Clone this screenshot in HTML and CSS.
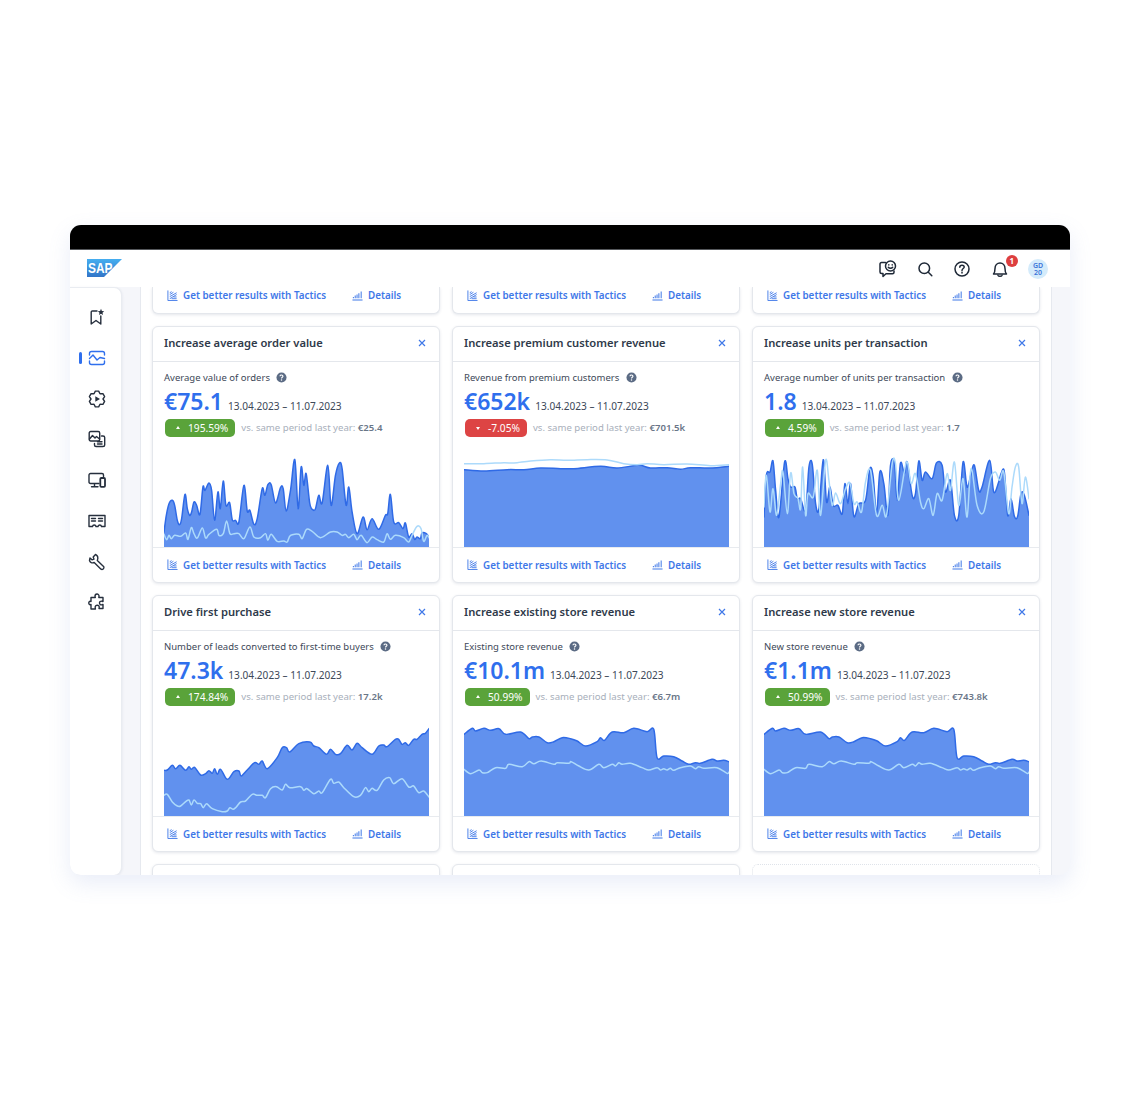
FILE: index.html
```html
<!DOCTYPE html>
<html lang="en">
<head>
<meta charset="utf-8">
<title>Tactics</title>
<link rel="stylesheet" href="styles.css">
</head>
<body>
<svg class="defs" width="0" height="0" aria-hidden="true">
  <symbol id="i-tactics" viewBox="0 0 12 12"><path d="M1 .5V11.5H11.5M3 9.5 10.5 5M3 7.2 10.5 3M3 5 7 2.5M3 3 5 1.8M5 9.5H10.5M7 7.6H10.5" fill="none" stroke="currentColor" stroke-width="1"/></symbol>
  <symbol id="i-bars" viewBox="0 0 12 12"><path d="M.5 11H11.5M1.5 9V7.5M3.5 9V6M5.5 9V5M7.5 9V3.5M10 9V1.5" fill="none" stroke="currentColor" stroke-width="1.1"/></symbol>
  <symbol id="i-help" viewBox="0 0 12 12"><circle cx="6" cy="6" r="5.5" fill="#5b6b84"/><path d="M4.4 4.7C4.4 3.7 5.1 3.2 6 3.2S7.6 3.8 7.6 4.6C7.6 5.7 6 5.7 6 7" fill="none" stroke="#fff" stroke-width="1.2"/><circle cx="6" cy="8.8" r=".8" fill="#fff"/></symbol>
  <symbol id="i-close" viewBox="0 0 8 8"><path d="M1 1 7 7M7 1 1 7" fill="none" stroke="currentColor" stroke-width="1.2"/></symbol>
</svg>
<div class="window">
  <div class="topbar"></div>
  <header class="header">
    <svg class="logo" viewBox="0 0 35 18" width="35" height="18">
      <defs><linearGradient id="sap" x1="0" y1="0" x2="0" y2="1"><stop offset="0" stop-color="#45aef0"/><stop offset="1" stop-color="#3275c8"/></linearGradient></defs>
      <polygon points="0,0 35,0 17,18 0,18" fill="url(#sap)"/>
      <text x="1" y="14" class="logo-text" textLength="24.5" lengthAdjust="spacingAndGlyphs">SAP</text>
    </svg>
    <div class="tools">
      <svg class="tool" viewBox="0 0 18 18"><path d="M6.5 2.5H2.5C1.6 2.5 1 3.1 1 4V12C1 12.9 1.6 13.5 2.5 13.5H4V16.5L7 13.8H13.5C14.4 13.8 15 13.2 15 12.3V11"/><circle cx="11.5" cy="6" r="5"/><path d="M9.3 7.3C10.3 8.5 12.7 8.5 13.7 7.3M9.8 4.7V5M13.2 4.7V5"/></svg>
      <svg class="tool" viewBox="0 0 18 18"><circle cx="8.3" cy="8.3" r="5.3"/><path d="M12.3 12.3 15.8 15.8"/></svg>
      <svg class="tool" viewBox="0 0 18 18"><circle cx="9" cy="9" r="7"/><path d="M6.8 7.2C6.8 5.9 7.8 5.2 9 5.2S11.2 6 11.2 7C11.2 8.5 9 8.5 9 10.4M9 12.2V13"/></svg>
      <div class="bell">
        <svg class="tool" viewBox="0 0 18 18"><path d="M2.5 14H15.5C14.2 12.6 14 11.5 14 8.5 14 5.3 11.8 3 9 3S4 5.3 4 8.5C4 11.5 3.8 12.6 2.5 14ZM7 15.5C7.5 16.5 10.5 16.5 11 15.5"/></svg>
        <span class="badge-count">1</span>
      </div>
      <div class="avatar">GD<br>20</div>
    </div>
  </header>
  <div class="workspace">
    <nav class="side">
      <svg class="nav" viewBox="0 0 18 18"><path d="M9 3H4.5C3.7 3 3.2 3.5 3.2 4.3V16L8 12.5 12.8 16V8"/><path class="solid" d="M13 .8 13.9 3 16.2 3.2 14.5 4.7 15 7 13 5.8 11 7 11.5 4.7 9.8 3.2 12.1 3Z"/></svg>
      <div class="nav-active">
        <span class="nav-bar"></span>
        <svg class="nav nav-blue" viewBox="0 0 18 18"><path d="M1.5 6V4.5C1.5 3.4 2.4 2.5 3.5 2.5H14.5C15.6 2.5 16.5 3.4 16.5 4.5V6M1.5 12V13.5C1.5 14.6 2.4 15.5 3.5 15.5H14.5C15.6 15.5 16.5 14.6 16.5 13.5V12"/><path d="M1.5 9.5 5 6 9 11 12 8.5 16.5 9.5"/></svg>
      </div>
      <svg class="nav" viewBox="0 0 18 18"><path d="M7.34 1.17H10.66L12 3.8 14.95 3.65 16.61 6.53 15 9 16.61 11.47 14.95 14.35 12 14.2 10.66 16.83H7.34L6 14.2 3.05 14.35 1.39 11.47 3 9 1.39 6.53 3.05 3.65 6 3.8Z"/><path class="solid" d="M7.3 6.3 12 9 7.3 11.7Z"/></svg>
      <svg class="nav" viewBox="0 0 18 18"><rect x="1.2" y="1.5" width="10.5" height="9.5" rx="1.5"/><path d="M1.5 9 4.5 5.5 7 8 8.5 6.5 11.5 9"/><path d="M13.5 6H15C16 6 16.7 6.6 16.7 7.5V15C16.7 15.9 16 16.5 15 16.5H8C7.1 16.5 6.5 15.9 6.5 15V13.5M9.5 11.8H14M9.5 14H14"/></svg>
      <svg class="nav" viewBox="0 0 18 18"><path d="M11 12.5H2.5C1.7 12.5 1 11.9 1 11V4C1 3.2 1.7 2.5 2.5 2.5H14C14.9 2.5 15.5 3.2 15.5 4V5.5M6.5 12.5V15.5M3.5 15.8H10"/><rect x="12.3" y="7" width="4.7" height="8.8" rx="1" class="thick"/></svg>
      <svg class="nav" viewBox="0 0 18 18"><path d="M1 3.5H17V14.5H13.5C13.3 13.5 12.5 13 11.8 13S10.3 13.5 10 14.5H8C7.8 13.5 7 13 6.2 13S4.7 13.5 4.5 14.5H1ZM3.5 6.5H7.5M3.5 9H7.5M10.5 6.5H14.5M10.5 9H14.5"/></svg>
      <svg class="nav" viewBox="0 0 18 18"><path d="M7.5 1.5 5.2 4 6 6.2 4 6.8 2 5 1.5 7.5C2 9.5 4 10.5 6.2 9.5L13 16.2C14.5 17 16.5 15.5 15.8 13.8L9.3 7.5C10.3 5 9.5 2.5 7.5 1.5Z"/></svg>
      <svg class="nav" viewBox="0 0 18 18"><path d="M7 3.2C7 1.8 8 1 9 1S11.2 1.8 11 3.5L10.8 4.5H15V8.5L13.8 8.2C12.5 8 11.5 8.8 11.5 10S12.5 12 13.8 11.8L15 11.5V15.5H11L11.2 14.5C11.4 13 10.4 12.2 9.3 12.2S7 13 7.2 14.5L7.4 16H3V11.5L2.6 11.7C1.4 12 .8 11 .8 10S1.4 8 2.6 8.3L3 8.5V4.5H7.3Z"/></svg>
    </nav>
    <main class="panel">
      <div class="grid">

        <article class="card card-stub">
          <footer class="foot">
            <a class="link link-tactics"><svg class="fi"><use href="#i-tactics"/></svg>Get better results with Tactics</a>
            <a class="link"><svg class="fi"><use href="#i-bars"/></svg>Details</a>
          </footer>
        </article>
        <article class="card card-stub">
          <footer class="foot">
            <a class="link link-tactics"><svg class="fi"><use href="#i-tactics"/></svg>Get better results with Tactics</a>
            <a class="link"><svg class="fi"><use href="#i-bars"/></svg>Details</a>
          </footer>
        </article>
        <article class="card card-stub">
          <footer class="foot">
            <a class="link link-tactics"><svg class="fi"><use href="#i-tactics"/></svg>Get better results with Tactics</a>
            <a class="link"><svg class="fi"><use href="#i-bars"/></svg>Details</a>
          </footer>
        </article>

        <article class="card">
          <div class="head"><h2>Increase average order value</h2><svg class="close"><use href="#i-close"/></svg></div>
          <div class="stats">
            <p class="label">Average value of orders<svg class="help"><use href="#i-help"/></svg></p>
            <p class="kpi"><b>€75.1</b><span>13.04.2023 – 11.07.2023</span></p>
            <p class="delta"><span class="pill up">195.59%</span><span class="vs">vs. same period last year: <b>€25.4</b></span></p>
          </div>
          <svg class="chart" data-chart="orders" viewBox="40 20 796 300" preserveAspectRatio="none"></svg>
          <footer class="foot">
            <a class="link link-tactics"><svg class="fi"><use href="#i-tactics"/></svg>Get better results with Tactics</a>
            <a class="link"><svg class="fi"><use href="#i-bars"/></svg>Details</a>
          </footer>
        </article>

        <article class="card">
          <div class="head"><h2>Increase premium customer revenue</h2><svg class="close"><use href="#i-close"/></svg></div>
          <div class="stats">
            <p class="label">Revenue from premium customers<svg class="help"><use href="#i-help"/></svg></p>
            <p class="kpi"><b>€652k</b><span>13.04.2023 – 11.07.2023</span></p>
            <p class="delta"><span class="pill down">-7.05%</span><span class="vs">vs. same period last year: <b>€701.5k</b></span></p>
          </div>
          <svg class="chart" data-chart="premium" viewBox="40 20 796 300" preserveAspectRatio="none"></svg>
          <footer class="foot">
            <a class="link link-tactics"><svg class="fi"><use href="#i-tactics"/></svg>Get better results with Tactics</a>
            <a class="link"><svg class="fi"><use href="#i-bars"/></svg>Details</a>
          </footer>
        </article>

        <article class="card">
          <div class="head"><h2>Increase units per transaction</h2><svg class="close"><use href="#i-close"/></svg></div>
          <div class="stats">
            <p class="label">Average number of units per transaction<svg class="help"><use href="#i-help"/></svg></p>
            <p class="kpi"><b>1.8</b><span>13.04.2023 – 11.07.2023</span></p>
            <p class="delta"><span class="pill up">4.59%</span><span class="vs">vs. same period last year: <b>1.7</b></span></p>
          </div>
          <svg class="chart" data-chart="units" viewBox="40 20 796 300" preserveAspectRatio="none"></svg>
          <footer class="foot">
            <a class="link link-tactics"><svg class="fi"><use href="#i-tactics"/></svg>Get better results with Tactics</a>
            <a class="link"><svg class="fi"><use href="#i-bars"/></svg>Details</a>
          </footer>
        </article>

        <article class="card">
          <div class="head"><h2>Drive first purchase</h2><svg class="close"><use href="#i-close"/></svg></div>
          <div class="stats">
            <p class="label">Number of leads converted to first-time buyers<svg class="help"><use href="#i-help"/></svg></p>
            <p class="kpi"><b>47.3k</b><span>13.04.2023 – 11.07.2023</span></p>
            <p class="delta"><span class="pill up">174.84%</span><span class="vs">vs. same period last year: <b>17.2k</b></span></p>
          </div>
          <svg class="chart" data-chart="leads" viewBox="40 20 796 300" preserveAspectRatio="none"></svg>
          <footer class="foot">
            <a class="link link-tactics"><svg class="fi"><use href="#i-tactics"/></svg>Get better results with Tactics</a>
            <a class="link"><svg class="fi"><use href="#i-bars"/></svg>Details</a>
          </footer>
        </article>

        <article class="card">
          <div class="head"><h2>Increase existing store revenue</h2><svg class="close"><use href="#i-close"/></svg></div>
          <div class="stats">
            <p class="label">Existing store revenue<svg class="help"><use href="#i-help"/></svg></p>
            <p class="kpi"><b>€10.1m</b><span>13.04.2023 – 11.07.2023</span></p>
            <p class="delta"><span class="pill up">50.99%</span><span class="vs">vs. same period last year: <b>€6.7m</b></span></p>
          </div>
          <svg class="chart" data-chart="store" viewBox="40 20 796 300" preserveAspectRatio="none"></svg>
          <footer class="foot">
            <a class="link link-tactics"><svg class="fi"><use href="#i-tactics"/></svg>Get better results with Tactics</a>
            <a class="link"><svg class="fi"><use href="#i-bars"/></svg>Details</a>
          </footer>
        </article>

        <article class="card">
          <div class="head"><h2>Increase new store revenue</h2><svg class="close"><use href="#i-close"/></svg></div>
          <div class="stats">
            <p class="label">New store revenue<svg class="help"><use href="#i-help"/></svg></p>
            <p class="kpi"><b>€1.1m</b><span>13.04.2023 – 11.07.2023</span></p>
            <p class="delta"><span class="pill up">50.99%</span><span class="vs">vs. same period last year: <b>€743.8k</b></span></p>
          </div>
          <svg class="chart" data-chart="store" viewBox="40 20 796 300" preserveAspectRatio="none"></svg>
          <footer class="foot">
            <a class="link link-tactics"><svg class="fi"><use href="#i-tactics"/></svg>Get better results with Tactics</a>
            <a class="link"><svg class="fi"><use href="#i-bars"/></svg>Details</a>
          </footer>
        </article>

        <article class="card"></article>
        <article class="card"></article>
        <article class="card card-empty"></article>
      </div>
    </main>
  </div>
</div>
<script src="charts.js"></script>
</body>
</html>
```
FILE: styles.css
```css
* { box-sizing: border-box; }
html, body { margin: 0; padding: 0; background: #fff; }
body {
  height: 1100px;
  padding: 225px 70px 0;
  font-family: "Noto Sans", "Liberation Sans", sans-serif;
  color: #2f3a4a;
  overflow: hidden;
}
.defs { position: absolute; }
p, h2 { margin: 0; }

.window {
  width: 1000px;
  height: 650px;
  display: flex;
  flex-direction: column;
  border-radius: 11px;
  background: #f5f6fa;
  box-shadow: 0 8px 22px rgba(120, 140, 210, .16);
  overflow: hidden;
}
.topbar { height: 25px; flex: none; background: #000; border-bottom: 1px solid #55585c; }
.header {
  height: 37px;
  flex: none;
  background: #fff;
  display: flex;
  align-items: center;
  justify-content: space-between;
  padding: 0 22px 0 17px;
}
.logo { display: block; margin-top: -1px; }
.logo-text { font: 700 14px "Liberation Sans", sans-serif; fill: #fff; }
.tools { display: flex; align-items: center; gap: 19.3px; }
.tool {
  width: 18px;
  height: 18px;
  display: block;
  fill: none;
  stroke: #1f2937;
  stroke-width: 1.5;
  stroke-linecap: round;
  stroke-linejoin: round;
}
.bell { position: relative; }
.badge-count {
  position: absolute;
  top: -5px;
  right: -9px;
  width: 12px;
  height: 12px;
  border-radius: 50%;
  background: #dd3f3f;
  color: #fff;
  font-size: 8px;
  font-weight: 700;
  line-height: 12px;
  text-align: center;
}
.avatar {
  width: 20px;
  height: 20px;
  border-radius: 50%;
  background: #d4ebfb;
  color: #3b74d8;
  font-size: 7px;
  font-weight: 600;
  line-height: 7px;
  text-align: center;
  padding-top: 3px;
}

.workspace { flex: 1; min-height: 0; display: flex; }
.side {
  width: 52px;
  flex: none;
  background: #fff;
  border: 1px solid #e9ecf1;
  border-width: 1px 1px 0 0;
  border-radius: 0 8px 8px 0;
  display: flex;
  flex-direction: column;
  align-items: center;
  gap: 22.75px;
  padding: 20px 0 0 2px;
  box-shadow: 0 1px 3px rgba(40, 60, 100, .1);
}
.nav {
  width: 18px;
  height: 18px;
  display: block;
  flex: none;
  fill: none;
  stroke: #262f3d;
  stroke-width: 1.4;
  stroke-linecap: round;
  stroke-linejoin: round;
}
.nav .solid { fill: #262f3d; stroke: none; }
.nav .thick { stroke-width: 1.8; }
.nav-blue { stroke: #2f6fed; }
.nav-active { position: relative; }
.nav-bar {
  position: absolute;
  left: -9px;
  top: 3px;
  width: 3px;
  height: 12px;
  border-radius: 2px;
  background: #2f6fed;
}

.panel {
  flex: 1;
  min-width: 0;
  margin: 0 18px;
  background: #fff;
  border-left: 1px solid #e6e9ef;
  border-right: 1px solid #e6e9ef;
  overflow: hidden;
  padding-left: 11px;
}
.grid {
  display: grid;
  grid-template-columns: repeat(3, 288px);
  grid-template-rows: 27px repeat(3, 257px);
  gap: 12px;
}
.card {
  background: #fff;
  border: 1px solid #e4e7ec;
  border-radius: 6px;
  box-shadow: 0 1px 3px rgba(40, 60, 100, .12);
  display: flex;
  flex-direction: column;
  overflow: hidden;
}
.card-stub { border-top: 0; border-radius: 0 0 6px 6px; justify-content: flex-end; }
.card-stub .foot { border-top: 0; height: 27px; padding-bottom: 9px; }
.card-empty { border: 1px dotted #dfe3ea; box-shadow: none; }

.head {
  height: 35px;
  flex: none;
  display: flex;
  align-items: center;
  justify-content: space-between;
  padding: 0 13px 2px 11px;
  border-bottom: 1px solid #e4e7ec;
}
.head h2 { font-size: 11.2px; font-weight: 600; color: #2f3a4a; line-height: 1; }
.close { width: 8px; height: 8px; color: #3f78e8; }

.stats { flex: 1; padding: 8px 11px 0; }
.label { display: flex; align-items: center; font-size: 9.5px; color: #3d4858; height: 14px; }
.help { width: 11px; height: 11px; margin-left: 6.5px; }
.kpi { display: flex; align-items: baseline; gap: 5px; height: 32px; margin-top: 1px; color: #3d4858; font-size: 10.1px; }
.kpi b { font-size: 23px; font-weight: 600; color: #2f6fed; line-height: 32px; }
.delta { display: flex; align-items: center; gap: 6px; margin-top: 2px; padding-left: 1px; }
.pill {
  height: 18px;
  border-radius: 5px;
  color: #fff;
  font-size: 10.2px;
  line-height: 18px;
  padding: 0 7px 0 11px;
  display: flex;
  align-items: center;
  gap: 8px;
}
.pill::before {
  content: "";
  width: 0;
  height: 0;
  border: 2.5px solid transparent;
}
.up { background: #5aa33a; }
.up::before { border-bottom: 3px solid #fff; margin-top: -3px; }
.down { background: #dd4444; }
.down::before { border-top: 3px solid #fff; margin-top: 3px; }
.vs { font-size: 9.6px; color: #a8afbb; margin-bottom: 2px; }
.vs b { font-weight: 600; color: #6a7688; }

.chart { display: block; width: 265px; height: 100px; flex: none; margin-left: 10.5px; }
.area { fill: #6191ee; stroke: none; }
.dark, .light { fill: none; stroke-linejoin: round; stroke-linecap: round; stroke-width: 4.5; }
.dark { stroke: #2f6ae6; }
.light { stroke: #acdafb; }

.foot {
  height: 35px;
  flex: none;
  display: flex;
  align-items: center;
  padding: 0 0 1px 14px;
  border-top: 1px solid #e8ebef;
}
.link {
  display: flex;
  align-items: center;
  gap: 5px;
  color: #3f78e8;
  font-size: 9.85px;
  font-weight: 600;
}
.link-tactics { width: 185px; }
.fi { width: 11px; height: 11px; flex: none; }
```
FILE: charts.js
```js
var SERIES = {
  orders: {
    base: 320,
    dark: [40,275,47,225,55,190,65,180,72,195,80,240,87,253,93,235,103,162,110,205,117,225,123,215,130,185,138,195,148,222,157,140,163,150,175,128,183,150,192,240,202,155,209,205,218,122,226,195,237,187,245,238,255,240,265,245,280,135,290,212,298,210,310,252,320,235,335,145,343,165,352,133,362,133,375,188,390,142,398,145,407,212,420,150,433,58,443,205,452,80,460,135,467,100,478,190,487,208,495,205,505,165,515,188,532,75,542,195,555,105,567,68,575,85,587,195,595,140,605,215,620,280,638,230,650,268,665,235,685,267,705,225,712,220,720,162,730,245,745,247,758,265,765,248,775,290,785,280,793,297,800,290,810,295,815,278,828,280,836,290],
    light: [40,282,48,298,55,285,62,295,72,285,90,288,105,278,112,297,122,262,130,280,140,293,155,263,165,293,175,282,198,267,205,285,218,280,228,242,238,280,250,280,265,280,280,295,298,260,310,290,330,292,345,280,352,300,362,282,380,303,400,302,410,305,420,285,445,282,455,295,468,267,485,273,510,292,540,275,560,275,575,285,585,282,595,292,610,282,620,298,632,285,650,307,665,290,680,298,700,305,710,280,720,297,735,285,760,292,775,305,785,285,800,258,812,265,820,303,830,285,836,292]
  },
  premium: {
    base: 320,
    dark: [40,88,100,92,170,88,220,88,270,83,330,85,370,85,450,78,500,83,565,75,600,83,650,82,690,87,720,82,780,83,836,78],
    light: [40,70,100,70,160,67,190,68,240,62,300,58,350,60,410,58,470,59,520,70,560,73,590,70,640,73,710,71,780,76,836,73]
  },
  units: {
    base: 320,
    dark: [40,230,47,105,58,95,67,62,75,150,85,230,102,65,112,115,120,140,133,140,140,175,150,175,165,210,175,80,185,72,195,190,205,205,218,58,228,185,238,140,248,195,262,195,275,220,283,130,292,190,300,130,310,228,325,190,345,180,358,85,368,110,378,220,388,95,400,130,412,225,420,75,432,68,440,180,450,68,462,100,470,65,485,165,495,160,505,62,515,120,525,95,545,115,558,68,575,75,585,155,600,120,612,225,625,225,638,65,650,140,662,100,672,75,685,150,695,140,718,60,730,155,745,125,752,100,762,95,772,225,782,175,792,228,802,228,812,160,822,165,836,225],
    light: [40,200,47,105,58,215,67,145,78,225,90,130,97,95,110,220,120,98,130,160,142,175,150,205,156,80,165,225,172,160,188,170,200,90,210,225,225,60,235,120,245,195,255,158,270,190,285,145,298,128,310,190,320,185,333,215,345,125,360,90,378,225,395,195,408,225,425,70,435,70,445,180,468,65,482,130,495,100,510,185,520,205,535,175,548,225,560,160,575,180,590,100,600,150,612,65,625,195,638,115,650,230,662,85,680,195,700,215,720,115,735,95,748,120,760,95,775,220,785,140,795,80,805,80,815,190,825,110,836,175]
  },
  leads: {
    base: 320,
    dark: [40,183,50,182,65,168,75,178,88,168,105,183,115,172,122,180,132,174,150,197,165,193,175,184,185,192,192,178,200,195,210,180,230,210,250,187,265,185,272,200,290,182,312,160,325,165,335,155,350,178,380,145,395,115,408,115,418,128,445,103,478,98,490,110,505,115,528,135,540,120,555,135,570,133,590,108,605,122,620,102,635,115,665,135,685,110,700,107,710,112,735,90,745,90,755,105,765,100,775,108,790,90,800,90,815,75,825,72,836,58],
    light: [40,258,50,255,65,278,80,290,90,290,105,277,115,272,122,287,130,272,140,282,150,283,158,295,168,283,185,298,215,307,230,305,238,295,248,300,258,292,270,278,285,275,305,255,320,258,335,258,345,265,360,238,378,232,395,242,405,225,418,235,450,232,460,243,470,238,490,253,505,245,515,250,540,210,550,222,565,218,580,235,610,262,630,258,645,235,655,247,665,237,680,243,700,212,718,205,730,223,755,208,775,233,790,230,805,250,820,245,836,263]
  },
  store: {
    base: 320,
    dark: [40,75,65,57,75,65,100,57,120,63,145,58,165,75,210,68,235,88,245,83,265,83,290,100,310,97,335,85,360,88,380,95,405,110,440,97,450,85,462,93,485,68,520,70,550,57,590,67,610,60,620,145,640,140,670,142,695,155,715,165,735,160,750,162,785,150,800,155,820,153,836,157],
    light: [40,180,60,193,85,182,95,190,110,190,135,175,165,177,175,165,215,172,235,157,250,163,272,155,310,165,320,160,355,162,362,157,385,170,415,182,445,165,460,175,485,165,495,170,505,160,515,165,540,162,575,175,595,182,620,175,630,182,640,178,650,182,660,177,670,183,690,175,720,170,735,178,745,172,760,177,800,175,830,192,836,188]
  }
};

function smooth(v) {
  var d = "M" + v[0] + " " + v[1];
  var n = v.length / 2;
  function px(i) { return v[2 * Math.max(0, Math.min(n - 1, i))]; }
  function py(i) { return v[2 * Math.max(0, Math.min(n - 1, i)) + 1]; }
  for (var i = 0; i < n - 1; i++) {
    d += "C" + (px(i) + (px(i + 1) - px(i - 1)) / 6) + " " + (py(i) + (py(i + 1) - py(i - 1)) / 6) +
      " " + (px(i + 1) - (px(i + 2) - px(i)) / 6) + " " + (py(i + 1) - (py(i + 2) - py(i)) / 6) +
      " " + px(i + 1) + " " + py(i + 1);
  }
  return d;
}

document.querySelectorAll("[data-chart]").forEach(function (svg) {
  var s = SERIES[svg.getAttribute("data-chart")];
  var line = smooth(s.dark);
  var last = s.dark[s.dark.length - 2];
  svg.innerHTML =
    '<path class="area" d="' + line + "L" + last + " " + s.base + "L40 " + s.base + 'Z"/>' +
    '<path class="dark" d="' + line + '"/>' +
    '<path class="light" d="' + smooth(s.light) + '"/>';
});
```
